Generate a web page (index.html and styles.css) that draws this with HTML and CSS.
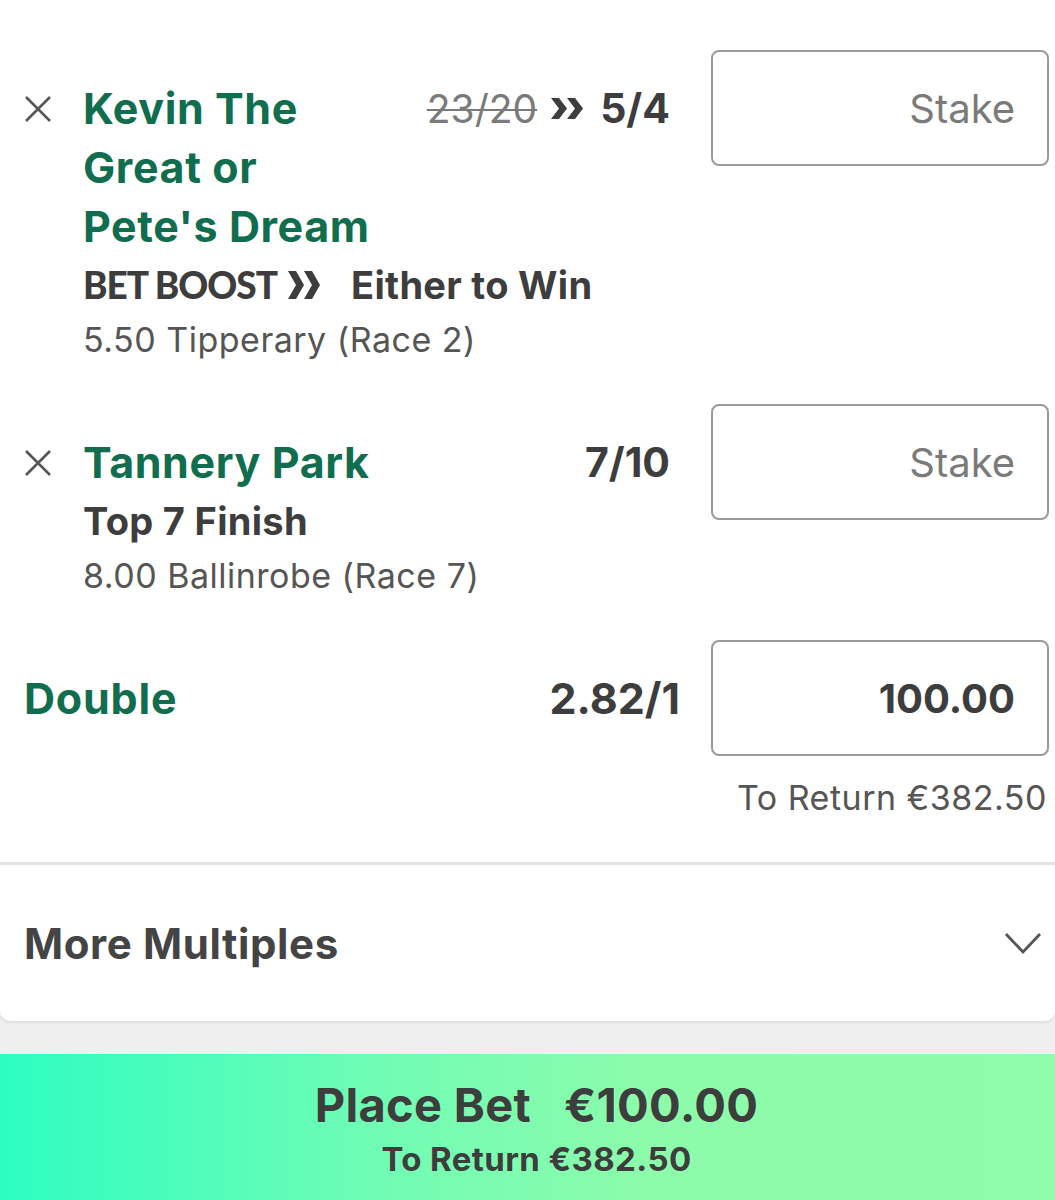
FILE: index.html
```html
<!DOCTYPE html>
<html lang="en">
<head>
    <meta charset="UTF-8">
    <meta name="viewport" content="width=device-width, initial-scale=1.0">
    <title>Bet Slip</title>
    <link rel="stylesheet" href="styles.css">
</head>
<body>
    <div class="slip">
        <div class="selection">
            <button class="remove" aria-label="Remove">
                <svg width="28" height="28" viewBox="0 0 28 28"><path d="M2 2 L26 26 M26 2 L2 26" /></svg>
            </button>
            <div class="details">
                <div class="head">
                    <div class="runner">Kevin The Great or Pete's Dream</div>
                    <div class="odds">
                        <span class="old-price">23/20</span>
                        <svg class="boost-arrow" width="32" height="21" viewBox="0 0 32 21"><path d="M0 0 H8 L16 10.5 L8 21 H0 L8 10.5 Z M16 0 H24 L32 10.5 L24 21 H16 L24 10.5 Z" /></svg>
                        <span class="price">5/4</span>
                    </div>
                </div>
                <div class="market">
                    <span class="boost">BET BOOST</span>
                    <svg class="boost-mark" width="33" height="28" viewBox="0 0 33 28"><path d="M0 0 H8 L16 14 L8 28 H0 L8 14 Z M16 0 H24 L32 14 L24 28 H16 L24 14 Z" /></svg>
                    Either to Win
                </div>
                <div class="event">5.50 Tipperary (Race 2)</div>
            </div>
            <input class="stake" type="text" placeholder="Stake">
        </div>

        <div class="selection">
            <button class="remove" aria-label="Remove">
                <svg width="28" height="28" viewBox="0 0 28 28"><path d="M2 2 L26 26 M26 2 L2 26" /></svg>
            </button>
            <div class="details">
                <div class="head">
                    <div class="runner">Tannery Park</div>
                    <div class="odds">
                        <span class="price">7/10</span>
                    </div>
                </div>
                <div class="market">Top 7 Finish</div>
                <div class="event">8.00 Ballinrobe (Race 7)</div>
            </div>
            <input class="stake" type="text" placeholder="Stake">
        </div>

        <div class="multiple">
            <div class="multiple-name">Double</div>
            <div class="multiple-price">2.82/1</div>
            <input class="stake stake-filled" type="text" value="100.00">
        </div>
        <div class="to-return">To Return €382.50</div>
    </div>

    <div class="more">
        <span>More Multiples</span>
        <svg class="chevron" width="38" height="24" viewBox="0 0 38 24"><path d="M2 3 L19 21 L36 3" /></svg>
    </div>

    <button class="place-bet">
        <span class="place-title"><span>Place Bet</span><span>€100.00</span></span>
        <span class="place-return">To Return €382.50</span>
    </button>
</body>
</html>
```

FILE: styles.css
```css
body {
    margin: 0;
    font-family: Inter, Roboto, "Liberation Sans", sans-serif;
    color: #3d3d3d;
    background: #efefef;
}
.slip {
    background: #fff;
    padding-top: 50px;
    padding-bottom: 41px;
}
.selection {
    display: flex;
    align-items: flex-start;
    margin-bottom: 41px;
}
.remove {
    width: 83px;
    margin-top: 45px;
    padding: 0 0 0 24px;
    border: none;
    background: none;
    text-align: left;
    cursor: pointer;
}
.remove svg path {
    stroke: #555;
    stroke-width: 2.6;
    fill: none;
}
.details {
    flex: 1;
    margin-top: 29px;
    padding-right: 41px;
}
.head {
    display: flex;
    justify-content: space-between;
    align-items: flex-start;
}
.runner {
    max-width: 300px;
    font-size: 43px;
    font-weight: 700;
    line-height: 59px;
    letter-spacing: 0.6px;
    color: #106d4d;
}
.odds {
    display: flex;
    align-items: center;
    line-height: 59px;
    white-space: nowrap;
}
.old-price {
    font-size: 39px;
    color: #7a7a7a;
    text-decoration: line-through;
    text-decoration-thickness: 2px;
}
.boost-arrow {
    margin: 0 17px 0 14px;
}
.boost-arrow path,
.boost-mark path {
    fill: #3d3d3d;
}
.price {
    font-size: 41px;
    font-weight: 700;
}
.market {
    display: flex;
    align-items: center;
    margin-top: 3px;
    font-size: 38px;
    font-weight: 700;
    line-height: 52px;
    letter-spacing: 0.3px;
}
.boost {
    font-family: Lato, sans-serif;
    font-weight: 900;
    font-size: 37px;
    letter-spacing: -1px;
}
.boost-mark {
    margin: 0 30px 0 11px;
}
.event {
    margin-top: 6px;
    font-size: 34px;
    line-height: 46px;
    letter-spacing: 0.5px;
    color: #555;
}
.stake {
    box-sizing: border-box;
    width: 338px;
    height: 116px;
    margin: 0 6px 0 0;
    padding: 0 32px 0 10px;
    border: 2.5px solid #9a9a9a;
    border-radius: 8px;
    font-family: inherit;
    font-size: 40px;
    text-align: right;
    color: #3d3d3d;
    outline: none;
}
.stake::placeholder {
    color: #7a7a7a;
}
.stake-filled {
    font-weight: 700;
}
.multiple {
    display: flex;
    align-items: center;
    padding-left: 24px;
}
.multiple-name {
    flex: 1;
    font-size: 43px;
    font-weight: 700;
    line-height: 59px;
    letter-spacing: 0.8px;
    color: #106d4d;
}
.multiple-price {
    margin-right: 31px;
    font-size: 43px;
    font-weight: 700;
}
.to-return {
    margin-top: 19px;
    padding-right: 8px;
    text-align: right;
    font-size: 34px;
    line-height: 46px;
    letter-spacing: 0.5px;
    color: #555;
}
.more {
    display: flex;
    justify-content: space-between;
    align-items: center;
    height: 156px;
    padding: 0 13px 0 24px;
    border-top: 3px solid #e4e4e4;
    border-radius: 0 0 10px 10px;
    background: #fff;
    box-shadow: 0 2px 3px rgba(0, 0, 0, 0.08);
    font-size: 42px;
    font-weight: 700;
    letter-spacing: 0.6px;
    color: #444;
}
.chevron path {
    stroke: #555;
    stroke-width: 2.8;
    fill: none;
}
.place-bet {
    display: flex;
    flex-direction: column;
    align-items: center;
    width: 100%;
    height: 147px;
    margin-top: 33px;
    padding: 23px 0 0 18px;
    border: none;
    background: linear-gradient(90deg, #2dfdc1 0%, #6ffcb5 35%, #8dfcaa 62%, #8efcaa 100%);
    font-family: inherit;
    color: #3d3d3d;
    cursor: pointer;
}
.place-title {
    display: flex;
    gap: 33px;
    font-size: 47px;
    font-weight: 700;
    line-height: 56px;
    letter-spacing: 0.3px;
}
.place-return {
    margin-top: 6px;
    font-size: 33px;
    font-weight: 700;
    line-height: 40px;
    letter-spacing: 0.4px;
}
```
